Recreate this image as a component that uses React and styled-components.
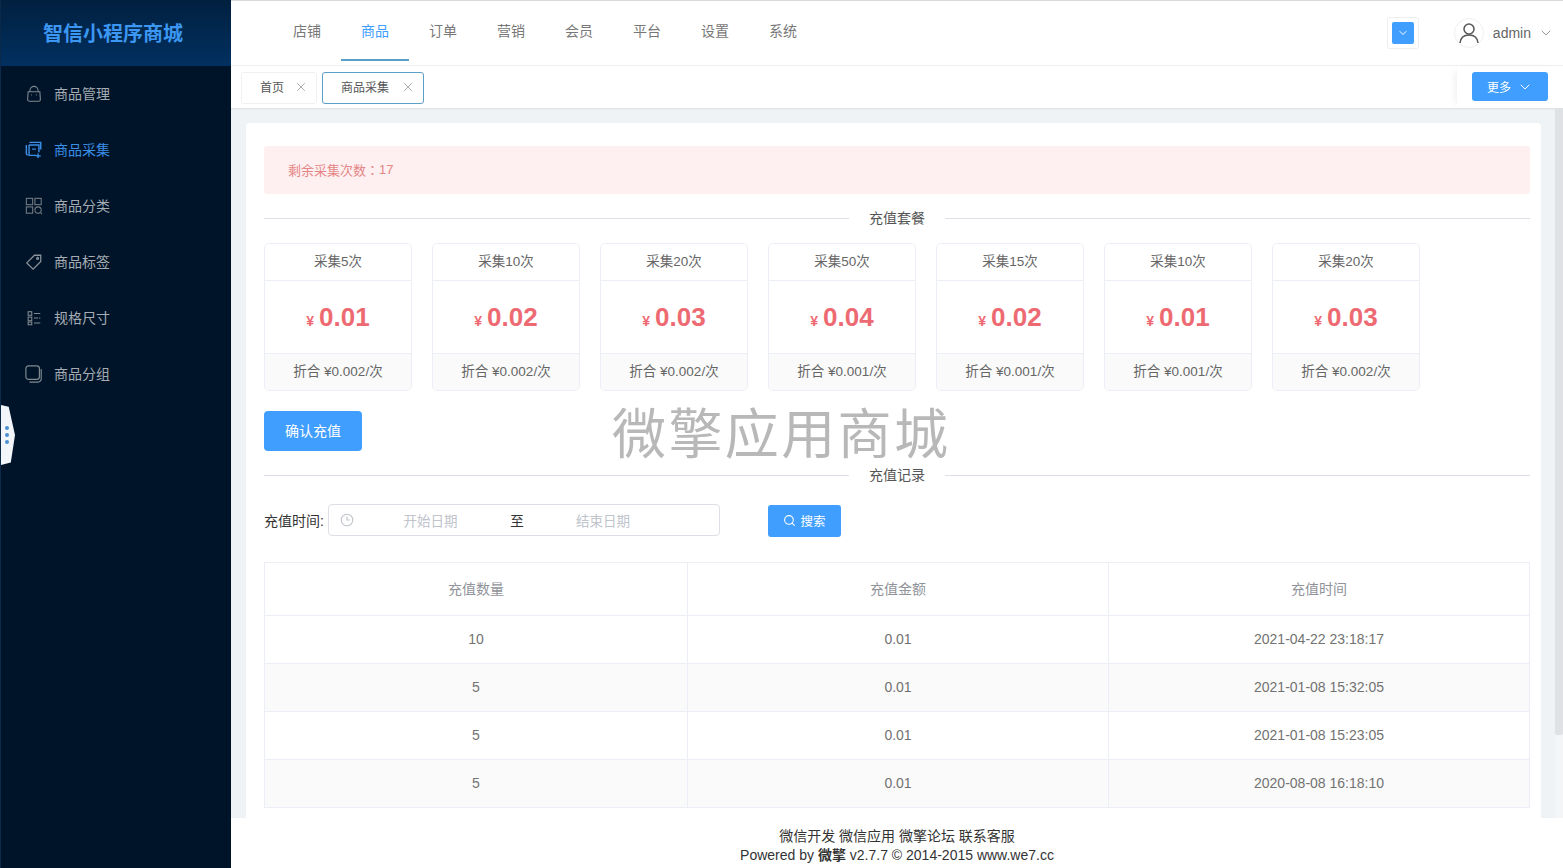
import React from 'react';
import styled, { createGlobalStyle } from 'styled-components';
import { ChevronDown, X, Search } from 'lucide-react';

const GlobalStyle = createGlobalStyle`
  html, body { margin: 0; padding: 0; height: 100%; overflow: hidden; }
  body {
    font-family: "Liberation Sans", "Noto Sans CJK SC", sans-serif;
    font-size: 14px;
    color: #606266;
  }
  * { box-sizing: border-box; }
`;

const Page = styled.div`
  position: relative;
  display: flex;
  width: 1563px;
  height: 868px;
  overflow: hidden;
  background: #fff;
`;

const Sidebar = styled.aside`
  flex: 0 0 231px;
  height: 100%;
  background: #001429;
  border-left: 1px solid #0b2a4a;
`;

const Logo = styled.div`
  height: 66px;
  display: flex;
  align-items: center;
  justify-content: center;
  padding: 0 6px 2px 0;
  background: linear-gradient(180deg, #01203f 0%, #013060 100%);
  color: #3c97f2;
  font-size: 20px;
  font-weight: 700;
`;

const MenuItem = styled.div`
  height: 56px;
  display: flex;
  align-items: center;
  gap: 11px;
  padding-left: 24px;
  font-size: 14px;
  color: ${props => (props.$active ? '#3a8ee6' : '#a5acb3')};
  svg { flex: none; width: 18px; height: 18px; }
  span { margin-bottom: 2px; }
`;

const Main = styled.div`
  flex: 1;
  min-width: 0;
  display: flex;
  flex-direction: column;
`;

const Header = styled.header`
  flex: 0 0 66px;
  display: flex;
  align-items: stretch;
  padding-left: 42px;
  border-top: 1px solid #d9d9d9;
  border-bottom: 1px solid #eceef1;
`;

const NavItem = styled.div`
  width: 68px;
  display: flex;
  align-items: center;
  justify-content: center;
  padding-bottom: 1px;
  font-size: 14px;
  color: ${props => (props.$active ? '#409eff' : '#777')};
  border-bottom: 2px solid ${props => (props.$active ? '#5a9fc8' : 'transparent')};
  margin-bottom: 4px;
`;

const HeaderRight = styled.div`
  margin-left: auto;
  display: flex;
  align-items: center;
  padding-right: 9px;
`;

const SwitchBox = styled.div`
  width: 32px;
  height: 32px;
  display: flex;
  align-items: center;
  justify-content: center;
  border: 1px solid #eee;
  border-radius: 3px;
  margin-right: 35px;
`;

const SwitchInner = styled.div`
  width: 22px;
  height: 22px;
  display: flex;
  align-items: center;
  justify-content: center;
  background: #409eff;
  border-radius: 2px;
  color: #fff;
`;

const Avatar = styled.div`
  width: 30px;
  height: 30px;
  border-radius: 50%;
  border: 1px solid #f0f0f0;
  display: flex;
  align-items: center;
  justify-content: center;
  margin-right: 9px;
`;

const UserName = styled.span`
  font-size: 14px;
  color: #666;
  margin-right: 7px;
`;

const TabBar = styled.div`
  flex: 0 0 42px;
  display: flex;
  align-items: flex-start;
  gap: 5px;
  padding: 6px 0 0 10px;
  position: relative;
`;

const Tab = styled.div`
  height: 32px;
  width: ${props => props.$width}px;
  display: flex;
  align-items: center;
  justify-content: space-between;
  padding: 0 8px 3px 18px;
  font-size: 12px;
  color: #555;
  border: 1px solid ${props => (props.$active ? '#5a9fc8' : '#eef0f2')};
  border-radius: 3px;
  svg { color: #888; }
`;

const MoreBox = styled.div`
  margin-left: auto;
  width: 106px;
  height: 42px;
  margin-top: -6px;
  padding: 6px 0 0 15px;
  background: #fff;
  box-shadow: -6px 0 8px -5px rgba(0, 0, 0, 0.08);
`;

const MoreButton = styled.div`
  width: 76px;
  height: 29px;
  display: flex;
  align-items: center;
  justify-content: center;
  gap: 6px;
  background: #409eff;
  border-radius: 3px;
  color: #fff;
  font-size: 12px;
`;

const ContentRow = styled.div`
  flex: 1;
  min-height: 0;
  display: flex;
  background: #f0f3f5;
  box-shadow: inset 0 2px 2px -1px rgba(0, 0, 0, 0.08);
`;

const Scroller = styled.div`
  flex: 1;
  min-width: 0;
  overflow: hidden;
  padding: 15px 14px 0 15px;
`;

const ScrollTrack = styled.div`
  flex: 0 0 8px;
  background: #f3f5f6;
`;

const ScrollThumb = styled.div`
  height: 627px;
  background: #dfe1e4;
  border-radius: 0 0 2px 2px;
`;

const Card = styled.div`
  background: #fff;
  border-radius: 4px 4px 0 0;
  padding: 23px 11px 30px 18px;
  min-height: 720px;
`;

const Alert = styled.div`
  height: 48px;
  display: flex;
  align-items: center;
  padding: 0 0 2px 24px;
  background: #fef0f0;
  border-radius: 3px;
  color: #e58585;
  font-size: 13px;
`;

// the full-width colon sits centred in the TC cut, as it does in the reference
const AlertColon = styled.span`
  font-family: "Noto Sans CJK TC", sans-serif;
`;

const Divider = styled.div`
  display: flex;
  align-items: center;
  height: 14px;
  font-size: 14px;
  color: #555;
  margin: ${props => props.$margin};
  &::before, &::after {
    content: '';
    flex: 1;
    height: 1px;
    background: #dcdfe6;
  }
  span { padding: 0 20px 3px; }
`;

const Packages = styled.div`
  display: flex;
  gap: 20px;
`;

const PackageCard = styled.div`
  width: 148px;
  height: 148px;
  display: flex;
  flex-direction: column;
  border: 1px solid #ebeef5;
  border-radius: 5px;
  overflow: hidden;
`;

const PackageTitle = styled.div`
  flex: 0 0 37px;
  display: flex;
  align-items: center;
  justify-content: center;
  padding-bottom: 4px;
  font-size: 13.500px;
  color: #666;
  border-bottom: 1px solid #ebeef5;
`;

const PackagePrice = styled.div`
  flex: 1;
  display: flex;
  align-items: baseline;
  justify-content: center;
  padding-top: 21px;
  gap: 5px;
  color: #ed6a72;
  font-size: 14px;
  font-weight: 700;
  strong { font-size: 26px; font-weight: 700; }
`;

const PackageFoot = styled.div`
  flex: 0 0 37px;
  display: flex;
  align-items: center;
  justify-content: center;
  padding-bottom: 4px;
  font-size: 13.500px;
  color: #666;
  background: #fafafa;
  border-top: 1px solid #ebeef5;
`;

const ConfirmButton = styled.div`
  width: 98px;
  height: 40px;
  margin-top: 20px;
  display: flex;
  align-items: center;
  justify-content: center;
  padding-bottom: 2px;
  background: #409eff;
  border-radius: 4px;
  color: #fff;
  font-size: 14px;
`;

const FilterRow = styled.div`
  display: flex;
  align-items: center;
  margin-top: 21px;
  height: 33px;
`;

const FilterLabel = styled.span`
  font-size: 14px;
  color: #333;
  width: 64px;
  white-space: nowrap;
`;

const DateRange = styled.div`
  width: 392px;
  height: 32px;
  display: flex;
  align-items: center;
  padding-left: 11px;
  border: 1px solid #dcdfe6;
  border-radius: 4px;
  font-size: 13.500px;
  color: #c0c4cc;
`;

const DateValue = styled.span`
  width: ${props => props.$width}px;
  text-align: center;
`;

const RangeSep = styled.span`
  color: #333;
  width: 20px;
  text-align: center;
`;

const SearchButton = styled.div`
  width: 73px;
  height: 32px;
  margin: 2px 0 0 48px;
  display: flex;
  align-items: center;
  justify-content: center;
  gap: 4px;
  padding-bottom: 1px;
  background: #409eff;
  border-radius: 3px;
  color: #fff;
  font-size: 12.500px;
`;

const Table = styled.div`
  margin-top: 26px;
  border: 1px solid #ebeef5;
  border-bottom: 0;
`;

const Row = styled.div`
  display: grid;
  grid-template-columns: 422px 421px 1fr;
  height: ${props => (props.$head ? 53 : 48)}px;
  background: ${props => (props.$striped ? '#fafafa' : '#fff')};
  border-bottom: 1px solid #ebeef5;
`;

const Cell = styled.div`
  display: flex;
  align-items: center;
  justify-content: center;
  padding-bottom: 2px;
  font-size: 14px;
  color: ${props => (props.$head ? '#909399' : '#727272')};
  & + & { border-left: 1px solid #ebeef5; }
`;

const Footer = styled.footer`
  flex: 0 0 50px;
  background: #fff;
  text-align: center;
  font-size: 14px;
  line-height: 19px;
  color: #333;
  padding-top: 9px;
  b { font-weight: 700; }
`;

const Watermark = styled.div`
  position: absolute;
  left: 612px;
  top: 402px;
  font-size: 54px;
  line-height: 66px;
  letter-spacing: 2.400px;
  color: #b8b8b8;
  white-space: nowrap;
  pointer-events: none;
`;

const SideHandle = styled.div`
  position: absolute;
  left: 1px;
  top: 405px;
  width: 14px;
  height: 60px;
  background: #f2f6fb;
  clip-path: polygon(0 0, 55% 3%, 100% 50%, 70% 96%, 0 100%);
  display: flex;
  flex-direction: column;
  align-items: center;
  justify-content: center;
  gap: 3px;
  padding-right: 2px;
  i { width: 4px; height: 4px; border-radius: 50%; background: #4a8fd0; }
`;

const iconStroke = { fill: 'none', stroke: 'currentColor', strokeWidth: 1.2 };

const BagIcon = () => (
  <svg viewBox="0 0 20 20" {...iconStroke} color="#7f8890">
    <path d="M3.500 7.500h13l.6 8.500a2 2 0 0 1-2 2H4.900a2 2 0 0 1-2-2z" />
    <path d="M5.500 7.500V6a4.500 4.500 0 0 1 9 0v1.500" />
    <path d="M7 11h.8M12.200 11h.8" />
  </svg>
);

const CollectIcon = () => (
  <svg viewBox="0 0 20 20" fill="none" stroke="currentColor" strokeWidth="1.600">
    <path d="M5 1.500h12.500v8" />
    <path d="M3 15.500a2 2 0 0 1-1.500-2V4.500" />
    <path d="M4.500 4.500h11v8M4.500 4.500v11.500h8" />
    <path d="M8 9h4M14.500 14v5M12 16.500h5.500" />
  </svg>
);

const GridIcon = () => (
  <svg viewBox="0 0 20 20" {...iconStroke} color="#727a82">
    <rect x="1.500" y="1.500" width="7" height="7" />
    <rect x="11" y="1.500" width="7" height="7" />
    <rect x="1.500" y="11" width="7" height="7" />
    <circle cx="14.500" cy="14.500" r="3.500" />
    <path d="M17 17l2 2" />
  </svg>
);

const TagIcon = () => (
  <svg viewBox="0 0 20 20" {...iconStroke} strokeWidth="1.400" color="#8a9299">
    <path d="M10.500 2.500h7v7L9 18 2 11z" />
    <circle cx="14" cy="6" r="1" />
  </svg>
);

const SpecIcon = () => (
  <svg viewBox="0 0 20 20" {...iconStroke} color="#7f8890">
    <rect x="3.500" y="3" width="4" height="4" />
    <rect x="3.500" y="9" width="4" height="4" />
    <rect x="3.500" y="14.500" width="4" height="3" />
    <path d="M10 5h7M10 10h4.500M15.500 10H17M10 15.500h7" />
  </svg>
);

const GroupIcon = () => (
  <svg viewBox="0 0 20 20" {...iconStroke} strokeWidth="1.300" color="#808a90">
    <rect x="1" y="1" width="15" height="15" rx="3" />
    <path d="M18 4.500v11a3.500 3.500 0 0 1-3.500 3.500H5" />
  </svg>
);

const UserIcon = () => (
  <svg width="22" height="22" viewBox="0 0 22 22" fill="none" stroke="#555" strokeWidth="1.500">
    <circle cx="11" cy="7" r="5" />
    <path d="M2 21c.5-5 4-8 9-8s8.500 3 9 8" />
  </svg>
);

const ClockIcon = () => (
  <svg width="14" height="14" viewBox="0 0 14 14" fill="none" stroke="#c0c4cc" strokeWidth="1.100">
    <circle cx="7" cy="7" r="5.800" />
    <path d="M7 3.500V7h3" />
  </svg>
);

const menus = [
  { label: '商品管理', icon: <BagIcon /> },
  { label: '商品采集', icon: <CollectIcon />, active: true },
  { label: '商品分类', icon: <GridIcon /> },
  { label: '商品标签', icon: <TagIcon /> },
  { label: '规格尺寸', icon: <SpecIcon /> },
  { label: '商品分组', icon: <GroupIcon /> },
];

const navs = ['店铺', '商品', '订单', '营销', '会员', '平台', '设置', '系统'];

const packages = [
  { title: '采集5次', price: '0.01', unit: '0.002' },
  { title: '采集10次', price: '0.02', unit: '0.002' },
  { title: '采集20次', price: '0.03', unit: '0.002' },
  { title: '采集50次', price: '0.04', unit: '0.001' },
  { title: '采集15次', price: '0.02', unit: '0.001' },
  { title: '采集10次', price: '0.01', unit: '0.001' },
  { title: '采集20次', price: '0.03', unit: '0.002' },
];

const records = [
  ['10', '0.01', '2021-04-22 23:18:17'],
  ['5', '0.01', '2021-01-08 15:32:05'],
  ['5', '0.01', '2021-01-08 15:23:05'],
  ['5', '0.01', '2020-08-08 16:18:10'],
];

export default function App() {
  return (
    <Page>
      <GlobalStyle />
      <Sidebar>
        <Logo>智信小程序商城</Logo>
        {menus.map(menu => (
          <MenuItem key={menu.label} $active={menu.active}>
            {menu.icon}
            <span>{menu.label}</span>
          </MenuItem>
        ))}
      </Sidebar>
      <Main>
        <Header>
          {navs.map(nav => (
            <NavItem key={nav} $active={nav === '商品'}>{nav}</NavItem>
          ))}
          <HeaderRight>
            <SwitchBox>
              <SwitchInner><ChevronDown size={12} /></SwitchInner>
            </SwitchBox>
            <Avatar><UserIcon /></Avatar>
            <UserName>admin</UserName>
            <ChevronDown size={16} color="#888" strokeWidth={1.300} />
          </HeaderRight>
        </Header>
        <TabBar>
          <Tab $width={76}>首页<X size={14} strokeWidth={1.200} /></Tab>
          <Tab $width={102} $active>商品采集<X size={14} strokeWidth={1.200} /></Tab>
          <MoreBox>
            <MoreButton>更多<ChevronDown size={16} strokeWidth={1.500} /></MoreButton>
          </MoreBox>
        </TabBar>
        <ContentRow>
          <Scroller>
            <Card>
              <Alert>剩余采集次数<AlertColon>：</AlertColon>17</Alert>
              <Divider $margin="17px 0 18px"><span>充值套餐</span></Divider>
              <Packages>
                {packages.map((item, index) => (
                  <PackageCard key={index}>
                    <PackageTitle>{item.title}</PackageTitle>
                    <PackagePrice>¥<strong>{item.price}</strong></PackagePrice>
                    <PackageFoot>折合 ¥{item.unit}/次</PackageFoot>
                  </PackageCard>
                ))}
              </Packages>
              <ConfirmButton>确认充值</ConfirmButton>
              <Divider $margin="17px 0 0"><span>充值记录</span></Divider>
              <FilterRow>
                <FilterLabel>充值时间:</FilterLabel>
                <DateRange>
                  <ClockIcon />
                  <DateValue $width={153}>开始日期</DateValue>
                  <RangeSep>至</RangeSep>
                  <DateValue $width={152}>结束日期</DateValue>
                </DateRange>
                <SearchButton><Search size={13} />搜索</SearchButton>
              </FilterRow>
              <Table>
                <Row $head>
                  <Cell $head>充值数量</Cell>
                  <Cell $head>充值金额</Cell>
                  <Cell $head>充值时间</Cell>
                </Row>
                {records.map((record, index) => (
                  <Row key={index} $striped={index % 2 === 1}>
                    {record.map((value, cellIndex) => (
                      <Cell key={cellIndex}>{value}</Cell>
                    ))}
                  </Row>
                ))}
              </Table>
            </Card>
          </Scroller>
          <ScrollTrack><ScrollThumb /></ScrollTrack>
        </ContentRow>
        <Footer>
          <div>微信开发 微信应用 微擎论坛 联系客服</div>
          <div>Powered by <b>微擎</b> v2.7.7 © 2014-2015 www.we7.cc</div>
        </Footer>
      </Main>
      <Watermark>微擎应用商城</Watermark>
      <SideHandle><i /><i /><i /></SideHandle>
    </Page>
  );
}
